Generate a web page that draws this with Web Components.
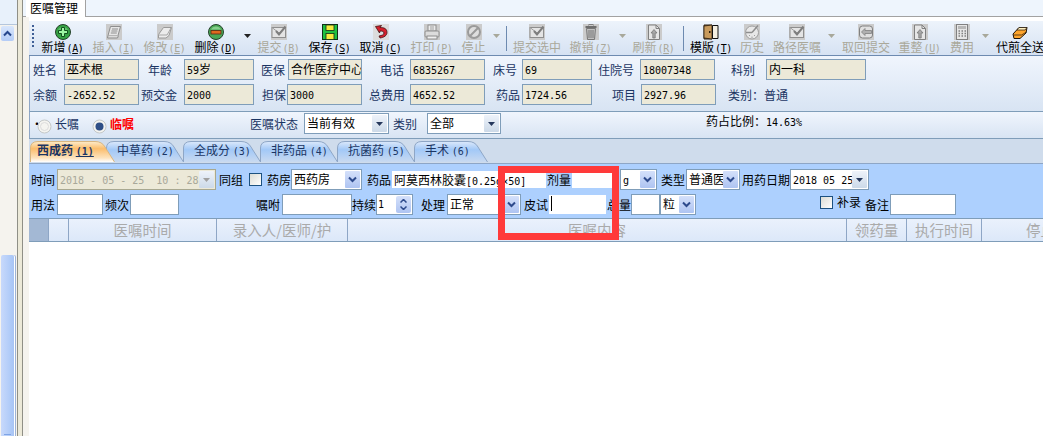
<!DOCTYPE html>
<html lang="zh">
<head>
<meta charset="utf-8">
<title>医嘱管理</title>
<style>
    html, body { margin: 0; height: 100%; background: #fff; overflow: hidden; }
    body {
        display: flex;
        font: 12px/14px "Noto Sans CJK SC", "Noto Sans", sans-serif;
        color: #000;
    }
</style>
</head>
<body>
<his-rail></his-rail>
<his-main>
    <his-tabbar>医嘱管理</his-tabbar>
    <his-toolbar>
        <tool-btn w="51" icon="plus" key="A">新增</tool-btn>
        <tool-btn w="51" icon="paper" key="I" off>插入</tool-btn>
        <tool-btn w="51" icon="block" key="E" off>修改</tool-btn>
        <tool-btn w="51" icon="minus" key="D">删除</tool-btn>
        <tool-arrow w="12"></tool-arrow>
        <tool-btn w="51" icon="mail" key="B" off>提交</tool-btn>
        <tool-btn w="51" icon="save" key="S">保存</tool-btn>
        <tool-btn w="51" icon="undo" key="C">取消</tool-btn>
        <tool-btn w="51" icon="print" key="P" off>打印</tool-btn>
        <tool-btn w="33" icon="stop" off>停止</tool-btn>
        <tool-arrow w="13" off></tool-arrow>
        <tool-sep w="6"></tool-sep>
        <tool-btn w="56" icon="mail" off>提交选中</tool-btn>
        <tool-btn w="51" icon="trash" key="Z" off>撤销</tool-btn>
        <tool-arrow w="12" off></tool-arrow>
        <tool-btn w="51" icon="doc" key="R" off>刷新</tool-btn>
        <tool-sep w="8"></tool-sep>
        <tool-btn w="48" icon="book" key="T">模版</tool-btn>
        <tool-btn w="34" icon="clock" off>历史</tool-btn>
        <tool-btn w="56" icon="mail" off>路径医嘱</tool-btn>
        <tool-arrow w="13" off></tool-arrow>
        <tool-btn w="56" icon="back" off>取回提交</tool-btn>
        <tool-btn w="51" icon="doc" key="U" off>重整</tool-btn>
        <tool-btn w="34" icon="calc" off>费用</tool-btn>
        <tool-arrow w="13" off></tool-arrow>
        <tool-btn w="56" icon="eraser">代煎全送</tool-btn>
    </his-toolbar>

    <his-panel h="56">
        <ui-row top="3">
            <ui-label navy style="margin-left:3px;width:24px">姓名</ui-label>
            <ui-field ro style="margin-left:7px;width:75px">巫术根</ui-field>
            <ui-label navy style="margin-left:9px;width:23px">年龄</ui-label>
            <ui-field ro style="margin-left:13px;width:70px"><n-um>59</n-um>岁</ui-field>
            <ui-label navy style="margin-left:7px;width:23px">医保</ui-label>
            <ui-field ro style="margin-left:4px;width:74px">合作医疗中心</ui-field>
            <ui-label navy style="margin-left:18px;width:23px">电话</ui-label>
            <ui-field ro style="margin-left:7px;width:75px"><n-um>6835267</n-um></ui-field>
            <ui-label navy style="margin-left:8px;width:23px">床号</ui-label>
            <ui-field ro style="margin-left:6px;width:70px"><n-um>69</n-um></ui-field>
            <ui-label navy style="margin-left:6px;width:35px">住院号</ui-label>
            <ui-field ro style="margin-left:7px;width:75px"><n-um>18007348</n-um></ui-field>
            <ui-label navy style="margin-left:16px;width:23px">科别</ui-label>
            <ui-field ro style="margin-left:12px;width:100px">内一科</ui-field>
        </ui-row>
        <ui-row top="4">
            <ui-label navy style="margin-left:3px;width:24px">余额</ui-label>
            <ui-field ro style="margin-left:7px;width:75px"><n-um>-2652.52</n-um></ui-field>
            <ui-label navy style="margin-left:2px;width:35px">预交金</ui-label>
            <ui-field ro style="margin-left:8px;width:70px"><n-um>2000</n-um></ui-field>
            <ui-label navy style="margin-left:8px;width:23px">担保</ui-label>
            <ui-field ro style="margin-left:2px;width:75px"><n-um>3000</n-um></ui-field>
            <ui-label navy style="margin-left:7px;width:35px">总费用</ui-label>
            <ui-field ro style="margin-left:6px;width:75px"><n-um>4652.52</n-um></ui-field>
            <ui-label navy style="margin-left:11px;width:23px">药品</ui-label>
            <ui-field ro style="margin-left:3px;width:70px"><n-um>1724.56</n-um></ui-field>
            <ui-label navy style="margin-left:20px;width:23px">项目</ui-label>
            <ui-field ro style="margin-left:6px;width:75px"><n-um>2927.96</n-um></ui-field>
            <ui-label navy style="margin-left:12px;width:62px">类别：普通</ui-label>
        </ui-row>
    </his-panel>

    <his-panel h="27">
        <ui-row top="1">
            <ui-label style="margin-left:1px;width:4px">·</ui-label>
            <ui-radio off style="margin-left:2px"></ui-radio>
            <ui-label navy style="margin-left:3px;width:24px">长嘱</ui-label>
            <ui-radio on style="margin-left:13px"></ui-radio>
            <ui-label red style="margin-left:3px;width:26px">临嘱</ui-label>
            <ui-label navy style="margin-left:114px;width:49px">医嘱状态</ui-label>
            <ui-select style="margin-left:5px;width:85px">当前有效</ui-select>
            <ui-label navy style="margin-left:4px;width:24px">类别</ui-label>
            <ui-select style="margin-left:10px;width:74px">全部</ui-select>
            <ui-label style="margin-left:205px;width:100px;margin-top:-3px">药占比例：<n-um>14.63%</n-um></ui-label>
        </ui-row>
    </his-panel>

    <his-tabs>
        <ui-tab active w="85" style="z-index:2">西成药 <n-um><u>(1)</u></n-um></ui-tab>
        <ui-tab w="78" style="margin-left:-9px">中草药 <n-um>(2)</n-um></ui-tab>
        <ui-tab w="78" style="margin-left:-1px">全成分 <n-um>(3)</n-um></ui-tab>
        <ui-tab w="78" style="margin-left:-1px">非药品 <n-um>(4)</n-um></ui-tab>
        <ui-tab w="78" style="margin-left:-1px">抗菌药 <n-um>(5)</n-um></ui-tab>
        <ui-tab w="74" style="margin-left:-1px">手术 <n-um>(6)</n-um></ui-tab>
    </his-tabs>

    <his-form>
        <ui-row top="5">
            <ui-label style="margin-left:2px;width:24px">时间</ui-label>
            <ui-select ro style="margin-left:2px;width:159px"><n-um>2018 - 05 - 25  10 : 28</n-um></ui-select>
            <ui-label style="margin-left:3px;width:24px">同组</ui-label>
            <ui-check style="margin-left:6px"></ui-check>
            <ui-label style="margin-left:5px;width:23px">药房</ui-label>
            <ui-select chev style="margin-left:1px;width:71px">西药房</ui-select>
            <ui-label style="margin-left:5px;width:23px">药品</ui-label>
            <ui-field flat style="margin-left:2px;width:154px;height:17px">阿莫西林胶囊<n-um>[0.25g×50]</n-um></ui-field>
            <ui-label style="margin-left:1px;width:24px">剂量</ui-label>
            <ui-field flat style="margin-left:1px;width:46px;height:17px"></ui-field>
            <ui-select chev style="margin-left:2px;width:37px"><n-um>g</n-um></ui-select>
            <ui-label style="margin-left:4px;width:24px">类型</ui-label>
            <ui-select chev style="margin-left:1px;width:54px">普通医</ui-select>
            <ui-label style="margin-left:2px;width:48px">用药日期</ui-label>
            <ui-select style="width:79px"><n-um>2018 05 25</n-um></ui-select>
        </ui-row>
        <ui-row top="4">
            <ui-label style="margin-left:2px;width:24px">用法</ui-label>
            <ui-field style="margin-left:2px;width:46px"></ui-field>
            <ui-label style="margin-left:2px;width:23px">频次</ui-label>
            <ui-field style="margin-left:2px;width:49px"></ui-field>
            <ui-label style="margin-left:77px;width:24px">嘱咐</ui-label>
            <ui-field style="margin-left:2px;width:70px"></ui-field>
            <ui-label style="width:24px">持续</ui-label>
            <ui-spin style="width:37px"><n-um>1</n-um></ui-spin>
            <ui-label style="margin-left:8px;width:24px">处理</ui-label>
            <ui-select chev style="margin-left:2px;width:74px">正常</ui-select>
            <ui-label style="margin-left:3px;width:24px">皮试</ui-label>
            <ui-field flat caret style="margin-left:1px;width:57px;height:19px"></ui-field>
            <ui-label style="margin-left:1px;width:24px">总量</ui-label>
            <ui-field style="width:29px"></ui-field>
            <ui-select chev style="width:36px">粒</ui-select>
            <ui-check style="margin-left:124px;margin-top:-5px"></ui-check>
            <ui-label style="margin-left:4px;width:24px;margin-top:-6px">补录</ui-label>
            <ui-label style="margin-left:4px;width:25px">备注</ui-label>
            <ui-field style="width:66px"></ui-field>
        </ui-row>
    </his-form>

    <his-grid>
        <grid-col fill style="width:20px"></grid-col>
        <grid-col style="width:20px"></grid-col>
        <grid-col style="width:148px">医嘱时间</grid-col>
        <grid-col style="width:131px">录入人/医师/护</grid-col>
        <grid-col style="width:499px">医嘱内容</grid-col>
        <grid-col style="width:60px">领药量</grid-col>
        <grid-col style="width:75px">执行时间</grid-col>
        <grid-col style="width:147px">停止时间</grid-col>
    </his-grid>
</his-main>
<red-mark></red-mark>

<script>
const MONO = '"DejaVu Sans Mono", "Liberation Mono", monospace';

function shell(el, html) {
    el.attachShadow({ mode: 'open' }).innerHTML = html.trim();
}

const gray = (inner) => `<rect width="16" height="16" fill="#cbcbcb"/>${inner}`;
const ICONS = {
    plus: `<circle cx="8" cy="8" r="7.5" fill="#35a244" stroke="#24402a"/><path d="M3 6a5.5 5 0 0 1 10 0" fill="#7fd98a" opacity=".6"/><path d="M6.5 3.5h3v3h3v3h-3v3h-3v-3h-3v-3h3z" fill="#9ff5a4" stroke="#12501f"/>`,
    minus: `<circle cx="8" cy="8" r="7.5" fill="#4aa755" stroke="#24402a"/><path d="M3 5.5a5.5 5 0 0 1 10 0" fill="#9ee0a2" opacity=".7"/><rect x="3" y="6.5" width="10" height="3.5" fill="#e06a20" stroke="#5a2a10" stroke-width=".8"/>`,
    paper: gray(`<path d="M4.5 2.5h10l-2.5 9h-10z" fill="#e6e6e6" stroke="#8e8e8e"/><path d="M6 5h6M5.4 7h6M4.8 9h6" stroke="#8e8e8e"/><path d="M2 11.5l-.5 2.5h10l1-2.5" fill="#dcdcdc" stroke="#8e8e8e"/>`),
    block: gray(`<path d="M1.5 10.5l5-7h8l-2.5 8-3 2.5h-7.500z" fill="#ececec" stroke="#9a9a9a"/><path d="M1.500 11h8.500l4-7" fill="none" stroke="#a8a8a8"/>`),
    mail: gray(`<rect x="1" y="3.500" width="13.500" height="10" fill="#e4e4e4" stroke="#8e8e8e"/><path d="M1 3.500l7 5.500 6.500-5.500" fill="none" stroke="#9c9c9c"/><path d="M5 7l3 3.500 6.500-8" fill="none" stroke="#7e7e7e" stroke-width="2"/>`),
    save: `<rect x=".5" y=".5" width="15" height="15" fill="#20c040" stroke="#103018"/><rect x="4" y="1" width="8" height="5.500" fill="#f8ec40" stroke="#103018" stroke-width=".8"/><rect x="4" y="9.500" width="8" height="6" fill="#f8ec40" stroke="#103018" stroke-width=".8"/>`,
    undo: `<rect width="16" height="16" fill="#dcdcdc"/><path d="M2.500 2.500l6-1-1.500 2c4 0 7 1 7 5 0 3-3 5-7 5.500l-1-2c3-.5 5-1.500 5-3 0-1.500-2-2-4-2l-.5 2z" fill="#d4202c" stroke="#401010" stroke-width=".8"/>`,
    print: gray(`<rect x="4" y="1" width="8" height="6" fill="#ececec" stroke="#8e8e8e"/><path d="M6 3h4M6 5h4" stroke="#a0a0a0"/><rect x="1" y="7" width="14" height="6" rx="1" fill="#dcdcdc" stroke="#8e8e8e"/><rect x="3" y="12" width="10" height="3" fill="#efefef" stroke="#8e8e8e"/>`),
    stop: gray(`<circle cx="8" cy="8" r="6" fill="#dedede" stroke="#9a9a9a" stroke-width="2"/><path d="M3.800 12.200l8.400-8.400" stroke="#9a9a9a" stroke-width="2"/>`),
    trash: gray(`<rect x="6" y="0.500" width="4" height="2" fill="none" stroke="#808080"/><path d="M2.500 3h11" stroke="#6e6e6e" stroke-width="2"/><path d="M3.500 4.500h9l-1 11h-7z" fill="#c0c0c0" stroke="#777"/><path d="M6 6v8M8 6v8M10 6v8" stroke="#777"/>`),
    doc: gray(`<path d="M2.500 1h7.500l3.500 3.500v11h-11z" fill="#e6e6e6" stroke="#808080"/><path d="M10 1v3.500h3.500" fill="none" stroke="#808080"/><path d="M5 9l3-3.500 3 3.500h-1.800v5h-2.400v-5z" fill="#a8a8a8" stroke="#707070" stroke-width=".7"/>`),
    book: `<path d="M1 1h8v14H1z" fill="#9c6f38" stroke="#2a1c0c"/><path d="M1 2l8 -1v14l-8 -1z" fill="#c89a5c" stroke="#2a1c0c" stroke-width=".8"/><rect x="6" y="7" width="1.500" height="2" fill="#2a1c0c"/><path d="M9.500 1.500h5.500v13h-5.500z" fill="#f4efe2" stroke="#101010"/>`,
    clock: gray(`<circle cx="8" cy="8.500" r="6.500" fill="#e8e8e8" stroke="#a0a0a0"/><path d="M8 8.500l6-7M8 8.500H2" stroke="#8e8e8e" stroke-width="1.500"/><path d="M5 12l1-1M11 12l-1-1M8 14v-1.500" stroke="#a0a0a0"/>`),
    back: gray(`<rect x="1.500" y="2" width="13" height="12" rx="3" fill="#e0e0e0" stroke="#808080"/><path d="M7 4.500L3.500 8 7 11.500V9.500h6.500v-3H7z" fill="#b0b0b0" stroke="#808080" stroke-width=".8"/>`),
    calc: gray(`<rect x="2.500" y=".5" width="11" height="15" fill="#e6e6e6" stroke="#808080"/><rect x="4" y="2" width="8" height="3" fill="#b8b8b8"/><path d="M4.500 7h1.500M7.500 7h1.500M10.500 7h1.500M4.500 9.500h1.500M7.500 9.500h1.500M10.500 9.500h1.500M4.500 12h1.500M7.500 12h1.500M10.500 12h1.500" stroke="#808080" stroke-width="1.400"/>`),
    eraser: `<path d="M1 10L7 3.500h8L14 9l-6 5.500H2z" fill="#ffa52c" stroke="#201408"/><path d="M7 3.500h8l-2 2.500H5z" fill="#fff0c0" stroke="#201408" stroke-width=".7"/><path d="M1.500 11h8l5-3" fill="none" stroke="#201408" stroke-width=".7"/>`
};

class HisRail extends HTMLElement {
    constructor() {
        super();
        shell(this, `
        <style>
            :host { display: flex; flex: none; width: 23px; height: 436px; }
            .bar { width: 17px; display: flex; flex-direction: column; background: #f5f3ee; }
            .head { height: 24px; background: #e8f1fb; border-bottom: 1px solid #b4c6dc; }
            .up { margin: 1px 0 0 1px; width: 13px; height: 15px; background: linear-gradient(#d8e6fc, #b4ccf6);
                border: 0; border-radius: 2px; display: flex; align-items: center; justify-content: center; }
            .track { flex: 1; }
            .thumb { height: 181px; width: 13px; margin-left: 1px; background: linear-gradient(90deg, #c8d9fb, #b0cbf8 70%, #a8c4f4);
                box-shadow: 1px 0 0 #fff, 2px 0 0 #9db3d6; border-radius: 2px 2px 0 0; position: relative; }
            .thumb::after { content: ""; position: absolute; left: 3px; right: 3px; bottom: 1px; height: 1px; background: #7fa4e6; }
            .split { width: 4px; flex: none; background: #ece9d8; border-left: 1px solid #8f8f86; border-right: 1px solid #8f8f86; }
        </style>
        <div class="bar">
            <div class="head"></div>
            <div class="up"><svg width="9" height="7" viewBox="0 0 9 7"><path d="M1 5.500l3.500-3.500 3.500 3.500" fill="none" stroke="#26468c" stroke-width="2"/></svg></div>
            <div class="track"></div>
            <div class="thumb"></div>
        </div>
        <div class="split"></div>`);
    }
}

class HisMain extends HTMLElement {
    constructor() {
        super();
        shell(this, `
        <style>
            :host { display: flex; flex-direction: column; flex: 1; min-width: 0; height: 436px; overflow: hidden;
                background: linear-gradient(90deg, #f5f3ee 6px, #fff 6px); }
        </style>
        <slot></slot>`);
    }
}

class HisTabbar extends HTMLElement {
    constructor() {
        super();
        shell(this, `
        <style>
            :host { display: flex; flex: none; height: 16px; background: #eef5fd; border-bottom: 1px solid #a2a2a2;
                margin-bottom: 4px; padding-left: 3px; }
            .tab { width: 55px; height: 17px; padding-left: 4px; background: #fff; border-right: 1px solid #a2a2a2;
                line-height: 15px; }
        </style>
        <div class="tab"><slot></slot></div>`);
    }
}

class HisToolbar extends HTMLElement {
    constructor() {
        super();
        shell(this, `
        <style>
            :host { display: flex; flex: none; height: 34px; margin-left: 6px; overflow: hidden;
                background: linear-gradient(#edf3fb, #d6e2f3); border-bottom: 1px solid #6d8ab0; }
            .grip { width: 5px; flex: none; margin: 4px 0 0 3px; height: 22px;
                background: radial-gradient(circle at 1px 1px, #3f5f96 1px, transparent 1.200px) 0 0 / 4px 4px repeat-y; }
        </style>
        <div class="grip"></div>
        <slot></slot>`);
    }
}

class ToolBtn extends HTMLElement {
    constructor() {
        super();
        const off = this.hasAttribute('off');
        const key = this.getAttribute('key');
        shell(this, `
        <style>
            :host { display: flex; flex: none; flex-direction: column; align-items: center; padding-top: 3px;
                width: ${this.getAttribute('w')}px; color: ${off ? '#aaa89a' : '#000'}; white-space: nowrap; }
            svg { display: block; width: 16px; height: 16px; flex: none; }
            .label { height: 14px; line-height: 14px; }
            .k { font: 10px/14px ${MONO}; letter-spacing: -.4px; margin-left: 1px; }
            u { text-underline-offset: 1px; }
        </style>
        <svg viewBox="0 0 16 16">${ICONS[this.getAttribute('icon')]}</svg>
        <div class="label"><slot></slot>${key ? `<span class="k">(<u>${key}</u>)</span>` : ''}</div>`);
    }
}

class ToolArrow extends HTMLElement {
    constructor() {
        super();
        const color = this.hasAttribute('off') ? '#a8a89a' : '#222';
        shell(this, `
        <style>
            :host { display: block; flex: none; width: ${this.getAttribute('w')}px; padding-top: 13px; }
            svg { display: block; margin: 0 auto; }
        </style>
        <svg width="7" height="4" viewBox="0 0 7 4"><path d="M0 0h7L3.500 4z" fill="${color}"/></svg>`);
    }
}

class ToolSep extends HTMLElement {
    constructor() {
        super();
        shell(this, `
        <style>
            :host { display: flex; flex: none; justify-content: center; width: ${this.getAttribute('w')}px; padding-top: 5px; height: 25px; }
            div { width: 1px; background: #6d8ab0; }
        </style>
        <div></div>`);
    }
}

class HisPanel extends HTMLElement {
    constructor() {
        super();
        shell(this, `
        <style>
            :host { display: block; flex: none; height: ${this.getAttribute('h') - 1}px; margin-left: 6px; position: relative;
                background: linear-gradient(#f0f5fd, #d8e4f3); border-left: 1px solid #8ea6c6; border-bottom: 1px solid #7f9db9; overflow: hidden; }
        </style>
        <slot></slot>`);
    }
}

class UiRow extends HTMLElement {
    constructor() {
        super();
        shell(this, `
        <style>
            :host { display: flex; align-items: center; height: 21px; margin-top: ${this.getAttribute('top') || 0}px; white-space: nowrap; }
        </style>
        <slot></slot>`);
    }
}

class UiLabel extends HTMLElement {
    constructor() {
        super();
        const color = this.hasAttribute('red') ? '#ff0000' : this.hasAttribute('navy') ? '#1b3563' : '#000';
        shell(this, `
        <style>
            :host { display: block; flex: none; color: ${color}; font-weight: ${this.hasAttribute('red') ? 700 : 400}; white-space: nowrap; }
        </style>
        <slot></slot>`);
    }
}

class NUm extends HTMLElement {
    constructor() {
        super();
        shell(this, `<style>:host { font: 10px/14px ${MONO}; font-weight: inherit; white-space: pre; }</style><slot></slot>`);
    }
}

class UiField extends HTMLElement {
    constructor() {
        super();
        const ro = this.hasAttribute('ro');
        const flat = this.hasAttribute('flat');
        shell(this, `
        <style>
            :host { display: block; flex: none; box-sizing: border-box; height: 21px; overflow: hidden; white-space: nowrap;
                padding: 1px 0 0 2px; line-height: 15px;
                background: ${ro ? '#ece9d8' : '#fff'}; border: ${flat ? '0' : '1px solid #7f9db9'}; }
            .caret { display: ${this.hasAttribute('caret') ? 'inline-block' : 'none'}; width: 1px; height: 15px; background: #000; }
        </style>
        <span class="caret"></span><slot></slot>`);
    }
}

class UiSelect extends HTMLElement {
    constructor() {
        super();
        const ro = this.hasAttribute('ro');
        const chev = this.hasAttribute('chev');
        const mark = chev
            ? `<svg width="9" height="7" viewBox="0 0 9 7"><path d="M1 1.500l3.500 3.500 3.500-3.500" fill="none" stroke="#2d4a8c" stroke-width="2"/></svg>`
            : `<svg width="7" height="4" viewBox="0 0 7 4"><path d="M0 0h7L3.500 4z" fill="${ro ? '#a0a0a0' : '#26385c'}"/></svg>`;
        shell(this, `
        <style>
            :host { display: flex; flex: none; box-sizing: border-box; height: 21px; align-items: stretch; white-space: nowrap;
                background: ${ro ? '#ece9d8' : '#fff'}; border: 1px solid ${ro ? '#a8a890' : '#7f9db9'}; color: ${ro ? '#a8a89a' : '#000'}; }
            .text { flex: 1; min-width: 0; overflow: hidden; padding-left: 2px; line-height: 17px; }
            .btn { flex: none; width: 15px; margin: 1px 1px 1px 0; display: flex; align-items: center; justify-content: center;
                background: ${chev ? 'linear-gradient(#d4e0fa, #aec4f2)' : 'linear-gradient(#eef3fa, #ccd9e8)'}; border-radius: 1px; }
        </style>
        <div class="text"><slot></slot></div>
        <div class="btn">${mark}</div>`);
    }
}

class UiSpin extends HTMLElement {
    constructor() {
        super();
        shell(this, `
        <style>
            :host { display: flex; flex: none; box-sizing: border-box; height: 21px; background: #fff; border: 1px solid #7f9db9; }
            .text { flex: 1; padding-left: 1px; line-height: 15px; }
            .btn { width: 15px; margin: 1px; display: flex; flex-direction: column; align-items: center; justify-content: center; gap: 3px;
                background: linear-gradient(#d4e0fa, #aec4f2); border-radius: 2px; }
            svg { display: block; }
        </style>
        <div class="text"><slot></slot></div>
        <div class="btn">
            <svg width="7" height="4" viewBox="0 0 7 4"><path d="M.5 3.500L3.500.5l3 3" fill="none" stroke="#2d4a8c" stroke-width="1.500"/></svg>
            <svg width="7" height="4" viewBox="0 0 7 4"><path d="M.5.5l3 3 3-3" fill="none" stroke="#2d4a8c" stroke-width="1.500"/></svg>
        </div>`);
    }
}

class UiCheck extends HTMLElement {
    constructor() {
        super();
        shell(this, `
        <style>
            :host { display: block; flex: none; box-sizing: border-box; width: 13px; height: 13px; border: 1px solid #1c5180;
                background: linear-gradient(135deg, #dcdcd4, #fff); }
        </style>`);
    }
}

class UiRadio extends HTMLElement {
    constructor() {
        super();
        const on = this.hasAttribute('on');
        shell(this, `
        <style>
            :host { display: block; flex: none; width: 15px; height: 15px; margin-top: 6px; }
            svg { display: block; }
        </style>
        <svg width="15" height="15" viewBox="0 0 15 15">
            <circle cx="7.500" cy="7.500" r="6.500" fill="#f4f4f0" stroke="#c4c8c8"/>
            ${on ? '<circle cx="7.500" cy="7.500" r="4" fill="#2f4f86"/>' : '<circle cx="7.500" cy="7.500" r="4" fill="none" stroke="#dcdcdc"/>'}
        </svg>`);
    }
}

class HisTabs extends HTMLElement {
    constructor() {
        super();
        shell(this, `
        <style>
            :host { display: flex; flex: none; height: 25px; margin-left: 6px; padding-left: 1px; box-sizing: border-box;
                background: #cfdcec; border-bottom: 1px solid #8ea6c6; align-items: flex-end; position: relative; z-index: 0; }
        </style>
        <slot></slot>`);
    }
}

class UiTab extends HTMLElement {
    constructor() {
        super();
        const w = +this.getAttribute('w');
        const active = this.hasAttribute('active');
        const d = `M.5 22V8Q.5 1.500 8 1.500H${w - 20}Q${w - 13} 1.500 ${w - 10} 7L${w - .5} 22`;
        shell(this, `
        <style>
            :host { display: block; flex: none; position: relative; box-sizing: border-box; width: ${w}px; height: 23px;
                padding: 3px 0 0 ${active ? 7 : 11}px; color: #1b3563; font-weight: ${active ? 700 : 400}; white-space: nowrap; }
            svg { position: absolute; left: 0; top: 0; z-index: -1; }
        </style>
        <svg width="${w}" height="23" viewBox="0 0 ${w} 23">
            <defs><linearGradient id="g" x1="0" y1="0" x2="0" y2="1">
                ${active
                    ? '<stop offset="0" stop-color="#fdeccb"/><stop offset=".35" stop-color="#fbbd6c"/><stop offset=".8" stop-color="#fde3bd"/><stop offset="1" stop-color="#fff"/>'
                    : '<stop offset="0" stop-color="#dce9fb"/><stop offset=".4" stop-color="#a2c8f7"/><stop offset="1" stop-color="#c9daf0"/>'}
            </linearGradient></defs>
            <path d="${d}" fill="url(#g)" stroke="${active ? '#d9b680' : '#8ea6c6'}"/>
        </svg>
        <slot></slot>`);
    }
}

class HisForm extends HTMLElement {
    constructor() {
        super();
        shell(this, `
        <style>
            :host { display: block; flex: none; height: 54px; margin-left: 6px; background: #add0fe; overflow: hidden; }
        </style>
        <slot></slot>`);
    }
}

class HisGrid extends HTMLElement {
    constructor() {
        super();
        shell(this, `
        <style>
            :host { display: flex; flex: none; height: 22px; margin-left: 6px; overflow: hidden; box-sizing: content-box;
                background: linear-gradient(#eaf1fc, #dce8f9); border-top: 1px solid #7f9db9; border-bottom: 1px solid #7f9db9; }
        </style>
        <slot></slot>`);
    }
}

class GridCol extends HTMLElement {
    constructor() {
        super();
        shell(this, `
        <style>
            :host { display: block; flex: none; box-sizing: border-box; text-align: center; white-space: nowrap; overflow: hidden;
                font-size: 14.500px; line-height: 22px; color: #aaa; border-right: 1px solid #8ea6c6;
                background: ${this.hasAttribute('fill') ? '#a3b8d4' : 'transparent'}; }
        </style>
        <slot></slot>`);
    }
}

class RedMark extends HTMLElement {
    constructor() {
        super();
        shell(this, `
        <style>
            :host { position: absolute; left: 498px; top: 166px; width: 107px; height: 60px; border: 7px solid #ff3a3a; }
        </style>`);
    }
}

customElements.define('his-rail', HisRail);
customElements.define('his-main', HisMain);
customElements.define('his-tabbar', HisTabbar);
customElements.define('his-toolbar', HisToolbar);
customElements.define('tool-btn', ToolBtn);
customElements.define('tool-arrow', ToolArrow);
customElements.define('tool-sep', ToolSep);
customElements.define('his-panel', HisPanel);
customElements.define('ui-row', UiRow);
customElements.define('ui-label', UiLabel);
customElements.define('n-um', NUm);
customElements.define('ui-field', UiField);
customElements.define('ui-select', UiSelect);
customElements.define('ui-spin', UiSpin);
customElements.define('ui-check', UiCheck);
customElements.define('ui-radio', UiRadio);
customElements.define('his-tabs', HisTabs);
customElements.define('ui-tab', UiTab);
customElements.define('his-form', HisForm);
customElements.define('his-grid', HisGrid);
customElements.define('grid-col', GridCol);
customElements.define('red-mark', RedMark);
</script>
</body>
</html>
